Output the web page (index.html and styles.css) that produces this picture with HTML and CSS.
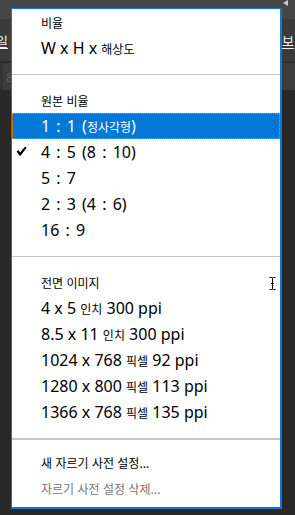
FILE: index.html
```html
<!DOCTYPE html>
<html lang="ko">
<head>
<meta charset="utf-8">
<link rel="stylesheet" href="styles.css">
</head>
<body>
<div class="app">
  <div class="bar-top">
    <span class="tri"></span>
  </div>
  <div class="bar-opts">
    <span class="lbl lbl-left">일</span>
    <span class="lbl lbl-right">보</span>
  </div>
  <div class="bar-line"></div>
  <div class="bar-tabs">
    <span class="tabnum">8</span>
  </div>
  <div class="canvas"></div>
</div>

<div class="menu">
  <div class="hdr">비율</div>
  <div class="item"><span class="mark"></span><span>W x H x <span class="ko">해상도</span></span></div>
  <div class="sep"></div>
  <div class="hdr">원본 비율</div>
  <div class="item ratio active"><span class="mark"></span><span>1 : 1 (<span class="ko">정사각형</span>)</span></div>
  <div class="item ratio"><span class="mark"><svg class="check" width="11" height="11" viewBox="0 0 11 11"><path d="M0.6 5.6 L2.4 4 L4.1 6.6 L9.1 0.4 L10.6 1.8 L4.2 10.2 Z" fill="#000"/></svg></span><span>4 : 5 (8 : 10)</span></div>
  <div class="item ratio"><span class="mark"></span><span>5 : 7</span></div>
  <div class="item ratio"><span class="mark"></span><span>2 : 3 (4 : 6)</span></div>
  <div class="item ratio"><span class="mark"></span><span>16 : 9</span></div>
  <div class="sep"></div>
  <div class="hdr">전면 이미지</div>
  <div class="item"><span class="mark"></span><span>4 x 5 <span class="ko">인치</span> 300 ppi</span></div>
  <div class="item"><span class="mark"></span><span>8.5 x 11 <span class="ko">인치</span> 300 ppi</span></div>
  <div class="item"><span class="mark"></span><span>1024 x 768 <span class="ko">픽셀</span> 92 ppi</span></div>
  <div class="item"><span class="mark"></span><span>1280 x 800 <span class="ko">픽셀</span> 113 ppi</span></div>
  <div class="item"><span class="mark"></span><span>1366 x 768 <span class="ko">픽셀</span> 135 ppi</span></div>
  <div class="sep sep-thick"></div>
  <div class="cmd">새 자르기 사전 설정...</div>
  <div class="cmd disabled">자르기 사전 설정 삭제...</div>

  <svg class="ibeam" width="7" height="13" viewBox="0 0 7 13"><path d="M0.5 0.5 H2.5 Q3.5 0.5 3.5 1.5 V11.5 Q3.5 12.5 2.5 12.5 H0.5 M6.5 0.5 H4.5 Q3.5 0.5 3.5 1.5 M3.5 11.5 Q3.5 12.5 4.5 12.5 H6.5 M2 6.5 H5" fill="none" stroke="#000" stroke-width="1"/></svg>
</div>
</body>
</html>
```

FILE: styles.css
```css
* { box-sizing: border-box; }
html, body {
  margin: 0;
  padding: 0;
  width: 295px;
  height: 515px;
  overflow: hidden;
  background: #282828;
  font-family: "Noto Sans", "Noto Sans CJK KR", sans-serif;
}
.app {
  display: flex;
  flex-direction: column;
  height: 515px;
}
.bar-top {
  height: 19px;
  background: #464646;
  position: relative;
}
.tri {
  position: absolute;
  left: 283px;
  top: 0;
  width: 0;
  height: 0;
  border-top: 3px solid transparent;
  border-bottom: 3px solid transparent;
  border-right: 5px solid #c8c8c8;
}
.bar-opts {
  height: 42px;
  background: #3b3b3b;
  display: flex;
  justify-content: space-between;
  align-items: center;
  color: #f2f2f2;
  font-family: "Noto Sans CJK KR", sans-serif;
  font-size: 13px;
}
.lbl {
  text-decoration: underline;
  text-underline-offset: 2px;
}
.lbl-left { margin-left: -4px; }
.lbl-right { margin-right: 1px; }
.bar-line {
  height: 2px;
  background: #2c2c2c;
}
.bar-tabs {
  height: 27px;
  background: #3c3c3c;
  display: flex;
  align-items: center;
  border-left: 3px solid #333;
}
.tabnum {
  color: #5c5c5c;
  font-size: 13px;
  margin-left: 3px;
}
.canvas {
  flex: 1;
  background: #282828;
}

.menu {
  position: absolute;
  left: 11px;
  top: 8px;
  width: 271px;
  height: 501px;
  background: #fff;
  border-style: solid;
  border-color: #0a78d7;
  border-width: 1px 2px 2px 1px;
  display: flex;
  flex-direction: column;
  color: #000;
}
.hdr {
  height: 26px;
  display: flex;
  align-items: center;
  padding-left: 29px;
  font-family: "Noto Sans CJK KR", sans-serif;
  font-size: 12px;
}
.item {
  height: 26px;
  display: flex;
  align-items: center;
  font-size: 16px;
}
.item.ratio { word-spacing: 2px; }
.mark {
  width: 29px;
  flex: none;
  display: flex;
  align-items: center;
  padding-left: 4px;
}
.check { display: block; margin-top: -2px; }
.ko {
  font-family: "Noto Sans CJK KR", sans-serif;
  font-size: 12px;
}
.item.active {
  background: #0078d7;
  color: #fff;
  outline: 1px dotted #f08a24;
  outline-offset: -1px;
}
.sep {
  height: 1px;
  background: #c6c6c6;
  margin: 13px 0 12px;
  flex: none;
}
.sep-thick {
  height: 2px;
  margin-bottom: 9px;
}
.cmd {
  height: 26px;
  display: flex;
  align-items: center;
  padding-left: 29px;
  font-family: "Noto Sans CJK KR", sans-serif;
  font-size: 12px;
}
.cmd.disabled { color: #767676; }
.ibeam {
  position: absolute;
  left: 257px;
  top: 268px;
}
```
